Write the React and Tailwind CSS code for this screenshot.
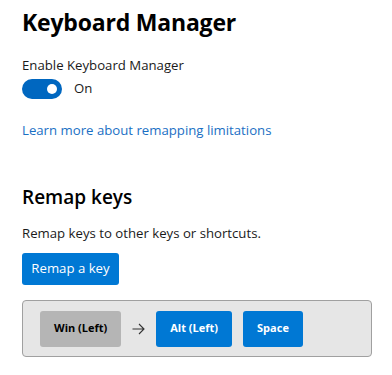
import React, { useState } from 'react';

const FONT = { fontFamily: '"Open Sans", "Noto Sans", sans-serif' };

function Toggle({ on, onChange }) {
  return (
    <button
      onClick={() => onChange(!on)}
      className={`relative w-[40px] h-[20px] rounded-full ${on ? 'bg-[#0067c0]' : 'bg-white border border-[#5c5c5c]'}`}
    >
      <span
        className={`absolute top-[5px] w-[10px] h-[10px] rounded-full ${on ? 'left-[25px] bg-white' : 'left-[5px] bg-[#5c5c5c]'}`}
      />
    </button>
  );
}

const KEY = ({ label, muted }) => (
  <div
    className={`h-[36px] px-[14px] flex items-center rounded-[3px] text-[11px] font-bold ${muted ? 'bg-[#b5b5b5] text-black' : 'bg-[#0078d4] text-white'}`}
  >
    {label}
  </div>
);

export default function App() {
  const [enabled, setEnabled] = useState(true);

  return (
    <div className="w-[392px] h-[375px] bg-white text-[#1a1a1a] pl-[22px] pt-[6px]" style={FONT}>
      <h1 className="text-[23px] font-bold leading-[32px] tracking-[-0.2px] text-black">Keyboard Manager</h1>

      <div className="mt-[17px] text-[13.2px] leading-[20px]">Enable Keyboard Manager</div>
      <div className="mt-[4px] flex items-center gap-[12px]">
        <Toggle on={enabled} onChange={setEnabled} />
        <span className="text-[13.2px]">{enabled ? 'On' : 'Off'}</span>
      </div>

      <a href="#" className="block mt-[21px] text-[13.2px] leading-[20px] text-[#1a6fc4]">
        Learn more about remapping limitations
      </a>

      <h2 className="mt-[44px] text-[19px] font-semibold leading-[26px] text-black">Remap keys</h2>
      <div className="mt-[13px] text-[13.2px] leading-[20px]">Remap keys to other keys or shortcuts.</div>

      <button className="mt-[10px] h-[32px] w-[97px] rounded-[3px] bg-[#0078d4] text-white text-[13.2px]">
        Remap a key
      </button>

      <div className="mt-[15px] w-[350px] h-[57px] bg-[#e6e6e6] border border-[#a0a0a0] rounded-[4px] flex items-center pl-[17px]">
        <KEY label="Win (Left)" muted />
        <svg width="13" height="12" viewBox="0 0 13 12" className="ml-[11px] mr-[11px]" fill="none" stroke="#333" strokeWidth="1.1">
          <path d="M0.5 6h11.5M7 1l5 5-5 5" />
        </svg>
        <KEY label="Alt (Left)" />
        <div className="w-[11px]" />
        <KEY label="Space" />
      </div>
    </div>
  );
}
